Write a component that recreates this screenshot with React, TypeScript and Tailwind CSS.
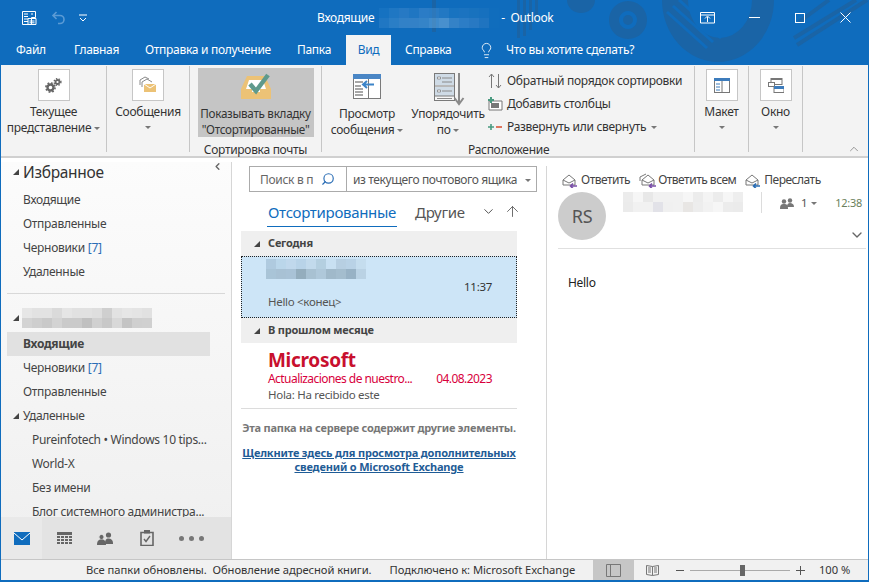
import React from 'react';
import { ChevronDown, ChevronUp, ChevronLeft, ArrowUp, Lightbulb, Search } from 'lucide-react';

const font = "font-['Noto_Sans','Open_Sans',sans-serif] tracking-[-0.3px]";

const Pixels = ({ rows, size, className }: { rows: string[][]; size: number; className?: string }) => (
  <div className={className}>
    {rows.map((row, i) => (
      <div key={i} className="flex">
        {row.map((c, j) => (
          <div key={j} style={{ background: c, width: size, height: size }} />
        ))}
      </div>
    ))}
  </div>
);

const TitleArt = () => (
  <svg className="absolute left-0 top-0 pointer-events-none" width="869" height="65" viewBox="0 0 869 65">
    <g fill="#1a64a6">
      <path d="M566 0a14 13 0 0 0 28 0z" />
      <path fillRule="evenodd" d="M627 1a19 19 0 1 0 .01 0zM627 11a9 9 0 1 1-.01 0z" />
      <circle cx="627" cy="20" r="5" />
      <path d="M661 0a56 62 0 0 0 112 0h-22a32 38 0 0 1-64 0h-6z" />
      <rect x="431" y="0" width="4" height="32" />
      <rect x="516" y="0" width="3" height="38" />
      <rect x="522" y="0" width="3" height="36" />
      <rect x="528" y="0" width="3" height="30" />
      <rect x="534" y="0" width="3" height="20" />
    </g>
    <g stroke="#0f6cbd" strokeWidth="3" fill="none">
      <path d="M666 12l40 36" />
      <path d="M672 6l40 36" />
      <path d="M678 0l42 38" />
    </g>
    <g stroke="#1a64a6" strokeWidth="4" fill="none">
      <path d="M866 0l-70 45" />
      <path d="M855 0l-62 38" />
      <path d="M828 0l-30 22" />
    </g>
  </svg>
);

const QuickAccess = () => (
  <div className="flex items-center w-[316px] pl-[20px] shrink-0">
    <svg width="16" height="16" viewBox="0 0 16 16" fill="none" stroke="#fff" strokeWidth="1">
      <path d="M1.5 1.5h13v6h-4v7h-9zM3 4h4M3 6.5h4M3 9h4M3 11.5h4M10 4h2M7 8.5h8v6H7z" />
      <path d="M8.5 11h5M8.5 12.8h5" />
    </svg>
    <svg className="ml-[14px]" width="16" height="16" viewBox="0 0 16 16" fill="none" stroke="#5b9bd5" strokeWidth="1.6">
      <path d="M5.5 2L2 5.5 5.5 9M2 5.5h7a4 4 0 0 1 0 8H7" />
    </svg>
    <svg className="ml-[12px]" width="8" height="8" viewBox="0 0 8 8" fill="none" stroke="#fff">
      <path d="M0 1h8M1 4l3 3 3-3" />
    </svg>
  </div>
);

const TitleBar = () => (
  <div className="relative h-[32px] pt-[3px] flex items-center shrink-0 text-white text-[12px]">
    <QuickAccess />
    <span>Входящие</span>
    <Pixels
      className="ml-[5px] opacity-60"
      size={10}
      rows={[
        ['#1b76c4', '#2b7fc8', '#3683c9', '#2a7dc6', '#3f88cc', '#3b86ca', '#2f80c8', '#1f78c3', '#2479c2', '#1f76c0', '#1b73bf', '#116fbe'],
        ['#2c7fc7', '#3c8acc', '#4a90ce', '#4b90ce', '#4f94d0', '#5fa0d6', '#6ea9da', '#4e92cf', '#4089cc', '#3983c8', '#2a7ac3', '#116fbe'],
      ]}
    />
    <span className="ml-[2px]">-&nbsp; Outlook</span>
    <div className="ml-auto flex items-center pr-[17px] relative">
      <svg width="15" height="12" viewBox="0 0 15 12" fill="none" stroke="#fff">
        <path d="M.5.5h14v10.5H.5zM.5 3h14" />
        <path d="M7.5 10V5M5 6.5l2.5-2.5L10 6.5" />
      </svg>
      <div className="ml-[34px] w-[11px] h-px bg-white" />
      <div className="ml-[35px] w-[10px] h-[10px] border border-white" />
      <svg className="ml-[35px]" width="11" height="11" viewBox="0 0 11 11" stroke="#fff">
        <path d="M.5.5l10 10M10.5.5l-10 10" />
      </svg>
    </div>
  </div>
);

const TabBar = () => (
  <div className="relative h-[33px] flex items-end shrink-0 text-white text-[12px] whitespace-nowrap">
    <div className="h-[30px] flex items-center">
      <span className="ml-[15px] w-[29px]">Файл</span>
      <span className="ml-[29px] w-[44px]">Главная</span>
      <span className="ml-[27px] w-[126px]">Отправка и получение</span>
      <span className="ml-[26px] w-[34px]">Папка</span>
      <span className="ml-[15px] w-[45px] h-[30px] flex items-center justify-center bg-[#f3f3f3] text-[#0f6cbd]">Вид</span>
      <span className="ml-[14px] w-[47px]">Справка</span>
      <Lightbulb size={17} strokeWidth={1.2} className="ml-[26px]" />
      <span className="ml-[11px]">Что вы хотите сделать?</span>
    </div>
  </div>
);

const IconBox = ({ children }: { children: React.ReactNode }) => (
  <div className="w-[32px] h-[32px] bg-white border border-[#c6c6c6] flex items-center justify-center">{children}</div>
);

const Caret = ({ className = '' }: { className?: string }) => (
  <span className={`inline-block w-0 h-0 border-x-[3px] border-x-transparent border-t-[3px] border-t-[#777] align-middle ${className}`} />
);

const BoxButton = ({ width, icon, label }: { width: number; icon: React.ReactNode; label: string }) => (
  <div className="flex flex-col items-center pt-[3px] border-r border-[#c6c6c6] mb-[4px]" style={{ width }}>
    <IconBox>{icon}</IconBox>
    <div className="mt-[3px] leading-[16px]">{label}</div>
    <Caret className="mt-[6px]" />
  </div>
);

const SortedIcon = () => (
  <svg width="32" height="28" viewBox="0 0 32 28">
    <path d="M7 4h18l6 13v10H1V17z" fill="#ecc276" />
    <path d="M9 8h14l3 9h-6v3h-8v-3H6z" fill="#fff" />
    <path d="M10 12l6 7L28 3" fill="none" stroke="#5f9a8c" strokeWidth="4.5" />
  </svg>
);

const PreviewIcon = () => (
  <svg className="shrink-0" width="28" height="25" viewBox="0 0 28 25">
    <rect x=".5" y=".5" width="27" height="24" fill="#fff" stroke="#7a7a7a" />
    <rect x="0" y="0" width="28" height="5" fill="#4a86c5" />
    <path d="M15.5 5v19" stroke="#7a7a7a" />
    <path d="M2 8h8M2 12h6M2 15h8M2 18h8M2 21h8" stroke="#8a8a8a" strokeWidth="1.4" />
    <path d="M10 10.5h11M14 7l-4 3.5 4 3.5" fill="none" stroke="#3c84c8" strokeWidth="2" />
  </svg>
);

const ArrangeIcon = () => (
  <svg width="31" height="33" viewBox="0 0 31 33">
    <rect x=".5" y=".5" width="20" height="27" fill="#f7f7f7" stroke="#7a7a7a" />
    <rect x="1" y="1" width="19" height="11" fill="#cfdbe6" />
    <rect x="1" y="14" width="19" height="9" fill="#cfdbe6" />
    <path d="M1 13h19M1 23h19" stroke="#7a7a7a" />
    <path d="M3.5 4h3v2h-3zM3.5 17h3v2h-3z" fill="#fff" stroke="#777" strokeWidth=".7" />
    <path d="M8 5h10M8 9h10M8 18h10M3 25.5h15" stroke="#8a8a8a" />
    <path d="M25 0v30M20.5 25l4.5 6 4.5-6" fill="none" stroke="#8a8a8a" strokeWidth="2" />
  </svg>
);

const Ribbon = () => (
  <div className="h-[91px] flex shrink-0 bg-[#f3f3f3] border-b-[2px] border-[#d0d0d0] text-[12px] text-[#333] box-content">
    <div className="flex w-full h-full pt-[1px]">
      <BoxButtonLarge />
      <BoxButton
        width={83}
        label="Сообщения"
        icon={
          <svg width="18" height="18" viewBox="0 0 18 18" fill="none">
            <path d="M1 9V4l5-3 4 2M3 11V6l5-3 5 3" stroke="#8a8a8a" />
            <rect x="5" y="8" width="12" height="8" fill="#ecc276" />
            <path d="M5 8l6 4 6-4" stroke="#fff" />
          </svg>
        }
      />
      <div className="w-[132px] flex flex-col items-center border-r border-[#c6c6c6] mb-[4px]">
        <div className="mt-[2px] w-[116px] h-[69px] bg-[#c5c5c5] flex flex-col items-center">
          <div className="mt-[4px] h-[27px]">
            <SortedIcon />
          </div>
          <div className="mt-[6px] leading-[16px] text-center whitespace-nowrap text-[11.7px]">
            Показывать вкладку
            <br />
            "Отсортированные"
          </div>
        </div>
        <div className="mt-[5px] leading-[16px]">Сортировка почты</div>
      </div>
      <div className="w-[373px] flex flex-col border-r border-[#c6c6c6] mb-[4px]">
        <div className="flex h-[68px] shrink-0">
          <div className="ml-[4px] w-[82px] flex flex-col items-center pt-[8px]">
            <PreviewIcon />
            <div className="mt-[7px] leading-[16px] text-center whitespace-nowrap">
              Просмотр
              <br />
              сообщения <Caret />
            </div>
          </div>
          <div className="w-[80px] flex flex-col items-center pt-[7px]">
            <div className="h-[33px] shrink-0 pl-[3px]">
              <ArrangeIcon />
            </div>
            <div className="leading-[16px] text-center whitespace-nowrap">
              Упорядочить
              <br />
              по <Caret />
            </div>
          </div>
          <div className="flex flex-col pt-[7px] gap-[7px] leading-[16px] whitespace-nowrap">
            <div className="flex items-center gap-[5px]">
              <svg width="14" height="16" viewBox="0 0 14 16" fill="none" stroke="#777">
                <path d="M3.5 15V1M1 4l2.5-3L6 4M10.5 1v14M8 12l2.5 3 2.5-3" />
              </svg>
              Обратный порядок сортировки
            </div>
            <div className="flex items-center gap-[4px]">
              <svg width="15" height="14" viewBox="0 0 15 14">
                <path d="M1 4h13v9H1z" fill="#fff" stroke="#777" />
                <rect x="3" y="6" width="8" height="5" fill="#777" />
                <path d="M3 0v6M0 3h6" stroke="#4a9a80" strokeWidth="2" />
              </svg>
              Добавить столбцы
            </div>
            <div className="flex items-center gap-[5px]">
              <svg width="14" height="8" viewBox="0 0 14 8">
                <path d="M0 4h6M3 1v6" stroke="#4a9a80" strokeWidth="1.6" />
                <path d="M8 4h6" stroke="#d9573a" strokeWidth="1.6" />
              </svg>
              Развернуть или свернуть <Caret />
            </div>
          </div>
        </div>
        <div className="mt-[8px] ml-[146px] leading-[16px]">Расположение</div>
      </div>
      <BoxButton
        width={54}
        label="Макет"
        icon={
          <svg width="16" height="15" viewBox="0 0 16 15">
            <rect x=".5" y=".5" width="15" height="14" fill="#fff" stroke="#777" />
            <rect width="16" height="3" fill="#3d7cbc" />
            <path d="M8 3v12" stroke="#777" />
            <path d="M2 6h4M2 9h4M2 12h4" stroke="#3d7cbc" />
          </svg>
        }
      />
      <BoxButton
        width={54}
        label="Окно"
        icon={
          <svg width="16" height="15" viewBox="0 0 16 15">
            <rect x="3" y=".5" width="11" height="6" fill="#fff" stroke="#777" />
            <rect x="3" width="11" height="2" fill="#777" />
            <rect x=".5" y="4.5" width="6" height="4" fill="#fff" stroke="#777" />
            <rect x="6" y="8.5" width="10" height="6" fill="#fff" stroke="#777" />
            <rect x="6" y="8" width="10" height="3" fill="#3d7cbc" />
          </svg>
        }
      />
      <div className="flex-1 flex items-end justify-end pr-[7px]">
        <ChevronUp size={14} strokeWidth={1} className="text-[#555]" />
      </div>
    </div>
  </div>
);

const BoxButtonLarge = () => (
  <div className="w-[106px] flex flex-col items-center pt-[3px] border-r border-[#c6c6c6] mb-[4px]">
    <IconBox>
      <svg width="17" height="15" viewBox="0 0 17 15" fill="none" stroke="#666">
        <circle cx="5.5" cy="9.5" r="3" strokeWidth="2.4" />
        <circle cx="5.5" cy="9.5" r="4.6" strokeWidth="1.6" strokeDasharray="1.8 1.8" />
        <circle cx="12.5" cy="4" r="2" strokeWidth="1.8" />
        <circle cx="12.5" cy="4" r="3.4" strokeWidth="1.4" strokeDasharray="1.4 1.4" />
      </svg>
    </IconBox>
    <div className="mt-[3px] leading-[16px] text-center whitespace-nowrap">
      Текущее
      <br />
      представление <Caret />
    </div>
  </div>
);

const FolderRow = ({ label, count, indent = 22, bold, arrow }: { label: string; count?: string; indent?: number; bold?: boolean; arrow?: boolean }) => (
  <div className={`h-[24px] shrink-0 flex items-center whitespace-nowrap text-[12px] leading-[12px] text-[#444] ${bold ? 'bg-[#e1e1e1] w-[203px] ml-[6px] font-bold text-[#333]' : ''}`} style={{ paddingLeft: bold ? indent - 6 : arrow ? 12 : indent }}>
    {arrow && <Tri className="mr-[4px]" />}
    {label}
    {count && <span className="ml-[3px] text-[#2a6db5]">{count}</span>}
  </div>
);

const Tri = ({ className = '' }: { className?: string }) => (
  <span className={`inline-block w-0 h-0 border-l-[6px] border-l-transparent border-b-[6px] border-b-[#444] ${className}`} />
);

const FooterIcons = () => (
  <div className="h-[42px] shrink-0 bg-[#e3e3e3] flex items-center">
    <div className="w-[41px] h-full bg-[#e9e9e9] flex items-center justify-center">
      <svg width="16" height="13" viewBox="0 0 16 13">
        <rect width="16" height="13" fill="#0f6cbd" />
        <path d="M0 1l8 7 8-7" fill="none" stroke="#fff" />
      </svg>
    </div>
    <svg className="ml-[15px]" width="15" height="13" viewBox="0 0 15 13" fill="#666">
      <rect width="15" height="3" />
      <path d="M0 4h3v2H0zM4 4h3v2H4zM8 4h3v2H8zM12 4h3v2h-3zM0 7h3v2H0zM4 7h3v2H4zM8 7h3v2H8zM12 7h3v2h-3zM0 10h3v2H0zM4 10h3v2H4zM8 10h3v2H8zM12 10h3v2h-3z" />
    </svg>
    <svg className="ml-[25px]" width="16" height="13" viewBox="0 0 16 13" fill="#666">
      <circle cx="11.5" cy="3" r="2.6" />
      <path d="M8 12c0-4 1-5.5 3.5-5.5S16 8 16 11v1z" />
      <circle cx="4.5" cy="5" r="2.6" fill="#666" stroke="#e3e3e3" />
      <path d="M0 13c0-4 1.5-5.5 4.5-5.5S9 9 9 13z" />
    </svg>
    <svg className="ml-[27px]" width="14" height="16" viewBox="0 0 14 16" fill="none" stroke="#666">
      <path d="M1 2.5h12v13H1z" strokeWidth="1.6" />
      <rect x="4.5" y="0" width="5" height="3" fill="#666" />
      <path d="M4 9l2 2.5L10 6" strokeWidth="1.4" />
    </svg>
    <div className="ml-[25px] flex gap-[5px]">
      <div className="w-[5px] h-[5px] rounded-full bg-[#777]" />
      <div className="w-[5px] h-[5px] rounded-full bg-[#777]" />
      <div className="w-[5px] h-[5px] rounded-full bg-[#777]" />
    </div>
  </div>
);

const NavPane = () => (
  <div className="w-[231px] shrink-0 flex flex-col border-r border-[#d6d6d6] bg-gradient-to-b from-[#fcfcfc] to-[#efefef] mt-[4px] text-[#444] overflow-hidden">
    <div className="flex-1 min-h-0 pt-[4px] overflow-hidden">
      <div className="flex items-center h-[12px] pl-[12px] text-[#333]">
        <Tri className="mr-[4px]" />
        <span className="text-[15.5px] leading-[12px] whitespace-nowrap">Избранное</span>
        <ChevronLeft size={11} strokeWidth={3} className="ml-auto mr-[8px] mt-[-12px] text-[#666]" />
      </div>
      <div className="mt-[10px]">
        <FolderRow label="Входящие" />
        <FolderRow label="Отправленные" />
        <FolderRow label="Черновики" count="[7]" />
        <FolderRow label="Удаленные" />
      </div>
      <div className="mx-[6px] mt-[9px] h-px bg-[#d8d8d8]" />
      <div className="flex items-end pl-[12px] h-[38px] pb-[4px]">
        <Tri className="mr-[3px] mb-[7px]" />
        <Pixels
          size={10}
          rows={[
            ['#e6e6e6', '#e2e2e2', '#e2e2e2', '#dadada', '#e5e5e5', '#e1e1e1', '#e1e1e1', '#dedede', '#cfcfcf', '#e2e2e2', '#e6e6e6', '#e4e4e4', '#e1e1e1'],
            ['#d3d3d3', '#cecece', '#c9c9c9', '#d3d3d3', '#cacaca', '#cacaca', '#c0c0c0', '#d0d0d0', '#c8c8c8', '#d8d8d8', '#c4c4c4', '#cfcfcf', '#d0d0d0'],
          ]}
        />
      </div>
      <FolderRow label="Входящие" bold />
      <FolderRow label="Черновики" count="[7]" />
      <FolderRow label="Отправленные" />
      <FolderRow label="Удаленные" arrow />
      <FolderRow label="Pureinfotech • Windows 10 tips..." indent={31} />
      <FolderRow label="World-X" indent={31} />
      <FolderRow label="Без имени" indent={31} />
      <FolderRow label="Блог системного администра..." indent={31} />
    </div>
    <FooterIcons />
  </div>
);

const GroupHeader = ({ label }: { label: string }) => (
  <div className="flex items-center h-[25px] pl-[13px] bg-[#efefef] text-[11px] font-bold text-[#444] tracking-[-0.2px]">
    <Tri className="mr-[8px]" />
    {label}
  </div>
);

const MessageList = () => (
  <div className="w-[315px] shrink-0 flex flex-col border-r border-[#d6d6d6] mt-[8px] text-[#444] overflow-hidden">
    <div className="ml-[17px] mr-[9px] h-[26px] flex border border-[#ababab] text-[12px] shrink-0">
      <div className="w-[97px] flex items-center border-r border-[#ababab] pl-[10px] pt-[2px] text-[#666] whitespace-nowrap">
        Поиск в п
        <Search size={14} strokeWidth={2} className="ml-[8px] mt-[-2px] text-[#2a6db5] -scale-x-100" />
      </div>
      <div className="flex-1 flex items-center pl-[6px] pt-[2px] text-[#555] whitespace-nowrap tracking-[-0.4px]">
        из текущего почтового ящика
        <Caret className="ml-auto mr-[5px]" />
      </div>
    </div>
    <div className="h-[39px] shrink-0 flex items-start pl-[35px] text-[15px] leading-[20px]">
      <div className="h-[35px] pt-[10px] text-[#0f6cbd] border-b-[1px] border-[#0f6cbd] px-[1px] whitespace-nowrap">Отсортированные</div>
      <div className="h-[35px] pt-[10px] ml-[18px] text-[#555]">Другие</div>
      <ChevronDown size={15} strokeWidth={1.6} className="ml-[16px] mt-[12px] text-[#555]" />
      <ArrowUp size={17} strokeWidth={1.2} className="ml-[8px] mt-[11px] text-[#555]" />
    </div>
    <div className="ml-[9px] w-[276px] flex flex-col">
      <GroupHeader label="Сегодня" />
      <div className="h-[62px] bg-[#cde5f7] border border-dotted border-[#222] flex flex-col">
        <Pixels
          className="ml-[24px] mt-[2px]"
          size={10}
          rows={[
            ['#afcadf', '#bad6ea', '#c0d8ec', '#b8d3e8', '#c2daec', '#b4cfe0', '#c8e0f2', '#b7cfe2', '#b9d2e6', '#c5ddee'],
            ['#a9c4d7', '#a8c1d4', '#a9c2d6', '#94adbd', '#a8c1d2', '#afc8da', '#a0b9ca', '#a4bdce', '#98b2c5', '#bad2e4'],
          ]}
        />
        <div className="flex justify-end pr-[24px] text-[11.5px] text-[#333] leading-[16px]">11:37</div>
        <div className="pl-[26px] mt-[-1px] text-[11.5px] text-[#555] leading-[16px]">Hello &lt;конец&gt;</div>
      </div>
      <GroupHeader label="В прошлом месяце" />
      <div className="h-[66px] border-b border-[#dcdcdc] pl-[27px] pr-[25px] flex flex-col">
        <div className="mt-[6px] text-[19px] font-bold leading-[22px] text-[#c8102e]">Microsoft</div>
        <div className="flex justify-between text-[12px] leading-[16px] text-[#d8003c] whitespace-nowrap tracking-[-0.55px]">
          <span>Actualizaciones de nuestro...</span>
          <span>04.08.2023</span>
        </div>
        <div className="text-[11.5px] leading-[15px] text-[#555]">Hola: Ha recibido este</div>
      </div>
      <div className="mt-[11px] text-center text-[11px] font-bold text-[#777] leading-[16px] whitespace-nowrap tracking-[-0.22px]">Эта папка на сервере содержит другие элементы.</div>
      <div className="mt-[10px] text-center text-[11px] font-bold text-[#1f5c96] underline leading-[14px] whitespace-nowrap tracking-[-0.18px]">
        Щелкните здесь для просмотра дополнительных
        <br />
        сведений о Microsoft Exchange
      </div>
    </div>
  </div>
);

const MailAction = ({ label, color, all }: { label: string; color: string; all?: boolean }) => (
  <div className="flex items-center gap-[2px]">
    <svg width="17" height="15" viewBox={all ? '-2 0 17 15' : '0 0 17 15'} fill="none" stroke="#777">
      {all && <path d="M-1 8V4l6-3" />}
      <path d="M1 7l6-5 6 5v5H1zM1 7l6 3 6-3" />
      <path d="M15 13H9M11 10.5L8.5 13l2.5 2.5" stroke={color} strokeWidth="1.6" />
    </svg>
    <span>{label}</span>
  </div>
);

const Reader = () => (
  <div className="flex-1 min-w-0 flex flex-col mt-[8px] pl-[11px] pr-[2px] text-[#444]">
    <div className="h-[26px] shrink-0 flex items-end gap-[9px] pl-[4px] text-[12px] pb-[3px] whitespace-nowrap tracking-[-0.5px]">
      <MailAction label="Ответить" color="#7a4fa8" />
      <MailAction label="Ответить всем" color="#7a4fa8" all />
      <MailAction label="Переслать" color="#2a6db5" />
    </div>
    <div className="flex h-[57px] shrink-0 border-b border-[#e0e0e0]">
      <div className="w-[48px] h-[48px] rounded-full bg-[#cccccc] flex items-center justify-center text-[18px] text-[#555]">RS</div>
      <Pixels
        className="ml-[17px]"
        size={10}
        rows={[
          ['#ececec', '#f6f6f6', '#e8e8e8', '#f1f1f1', '#f1f1f1', '#f1f1f1', '#f6f6f6', '#ececec', '#f4f4f4', '#ececec', '#f6f6f6', '#eeeeee'],
          ['#ebebeb', '#f1f1f1', '#f1f1f1', '#e2e2e8', '#f0f0f0', '#f1f1f1', '#e8e6e4', '#ededed', '#f2f2f2', '#f6f6f6', '#ececec', '#ebebeb'],
        ]}
      />
      <div className="flex-1 flex flex-col">
        <div className="flex h-[21px]">
          <div className="ml-[18px] w-px bg-[#dcdcdc]" />
          <div className="flex items-center ml-[18px] mt-[2px] text-[11.5px] text-[#555] h-[18px]">
            <svg width="14" height="11" viewBox="0 0 14 11" fill="#777">
              <circle cx="10" cy="2.5" r="2.2" />
              <path d="M7 9c0-3 1-4 3-4s4 1 4 4z" />
              <circle cx="4" cy="3.5" r="2.2" />
              <path d="M0 11c0-4 1-5 4-5s4 1 4 5z" />
            </svg>
            <span className="ml-[7px]">1</span>
            <Caret className="ml-[4px]" />
            <span className="ml-[18px] text-[11px] text-[#6b7f5c]">12:38</span>
          </div>
        </div>
        <div className="flex-1 flex justify-end items-end pb-[5px] pr-[1px]">
          <ChevronDown size={16} strokeWidth={2} className="text-[#666]" />
        </div>
      </div>
    </div>
    <div className="mt-[25px] ml-[10px] text-[12px] leading-[18px] text-[#222]">Hello</div>
  </div>
);

const StatusBar = () => (
  <div className="h-[20px] shrink-0 bg-[#f1f1f1] border-t border-[#c6c6c6] flex items-stretch text-[11.2px] tracking-[-0.04px] text-[#333] whitespace-nowrap box-content">
    <div className="flex items-center pl-[85px] w-[592px]">
      <span>Все папки обновлены.&nbsp; Обновление адресной книги.</span>
      <span className="ml-[18px]">Подключено к: Microsoft Exchange</span>
    </div>
    <div className="w-[41px] bg-[#c6c6c6] flex items-center justify-center">
      <svg width="15" height="13" viewBox="0 0 15 13" fill="none" stroke="#777">
        <path d="M.5.5h14v12H.5zM4.5.5v12" />
      </svg>
    </div>
    <div className="flex items-center">
      <svg className="ml-[12px]" width="13" height="12" viewBox="0 0 13 12" fill="none" stroke="#777">
        <path d="M.5 1.5l6 1 6-1v9l-6 1-6-1zM6.5 2.5v9M2 4h3M2 6h3M2 8h3M8 4h3M8 6h3M8 8h3" />
      </svg>
      <div className="ml-[17px] w-[8px] h-px bg-[#555]" />
      <div className="ml-[6px] w-[100px] h-px bg-[#aaa] flex items-center">
        <div className="ml-[50px] w-[5px] h-[11px] bg-[#666]" />
      </div>
      <svg className="ml-[6px]" width="9" height="9" viewBox="0 0 9 9" stroke="#555">
        <path d="M0 4.5h9M4.5 0v9" />
      </svg>
      <span className="ml-[14px]">100 %</span>
    </div>
  </div>
);

export default function App() {
  return (
    <div className={`${font} w-[869px] h-[582px] flex flex-col bg-white border-x border-b-[2px] border-[#0f6cbd] overflow-hidden`}>
      <div className="relative bg-[#0f6cbd] shrink-0 flex flex-col">
        <TitleArt />
        <TitleBar />
        <TabBar />
      </div>
      <Ribbon />
      <div className="flex-1 min-h-0 flex">
        <NavPane />
        <MessageList />
        <Reader />
      </div>
      <StatusBar />
    </div>
  );
}
